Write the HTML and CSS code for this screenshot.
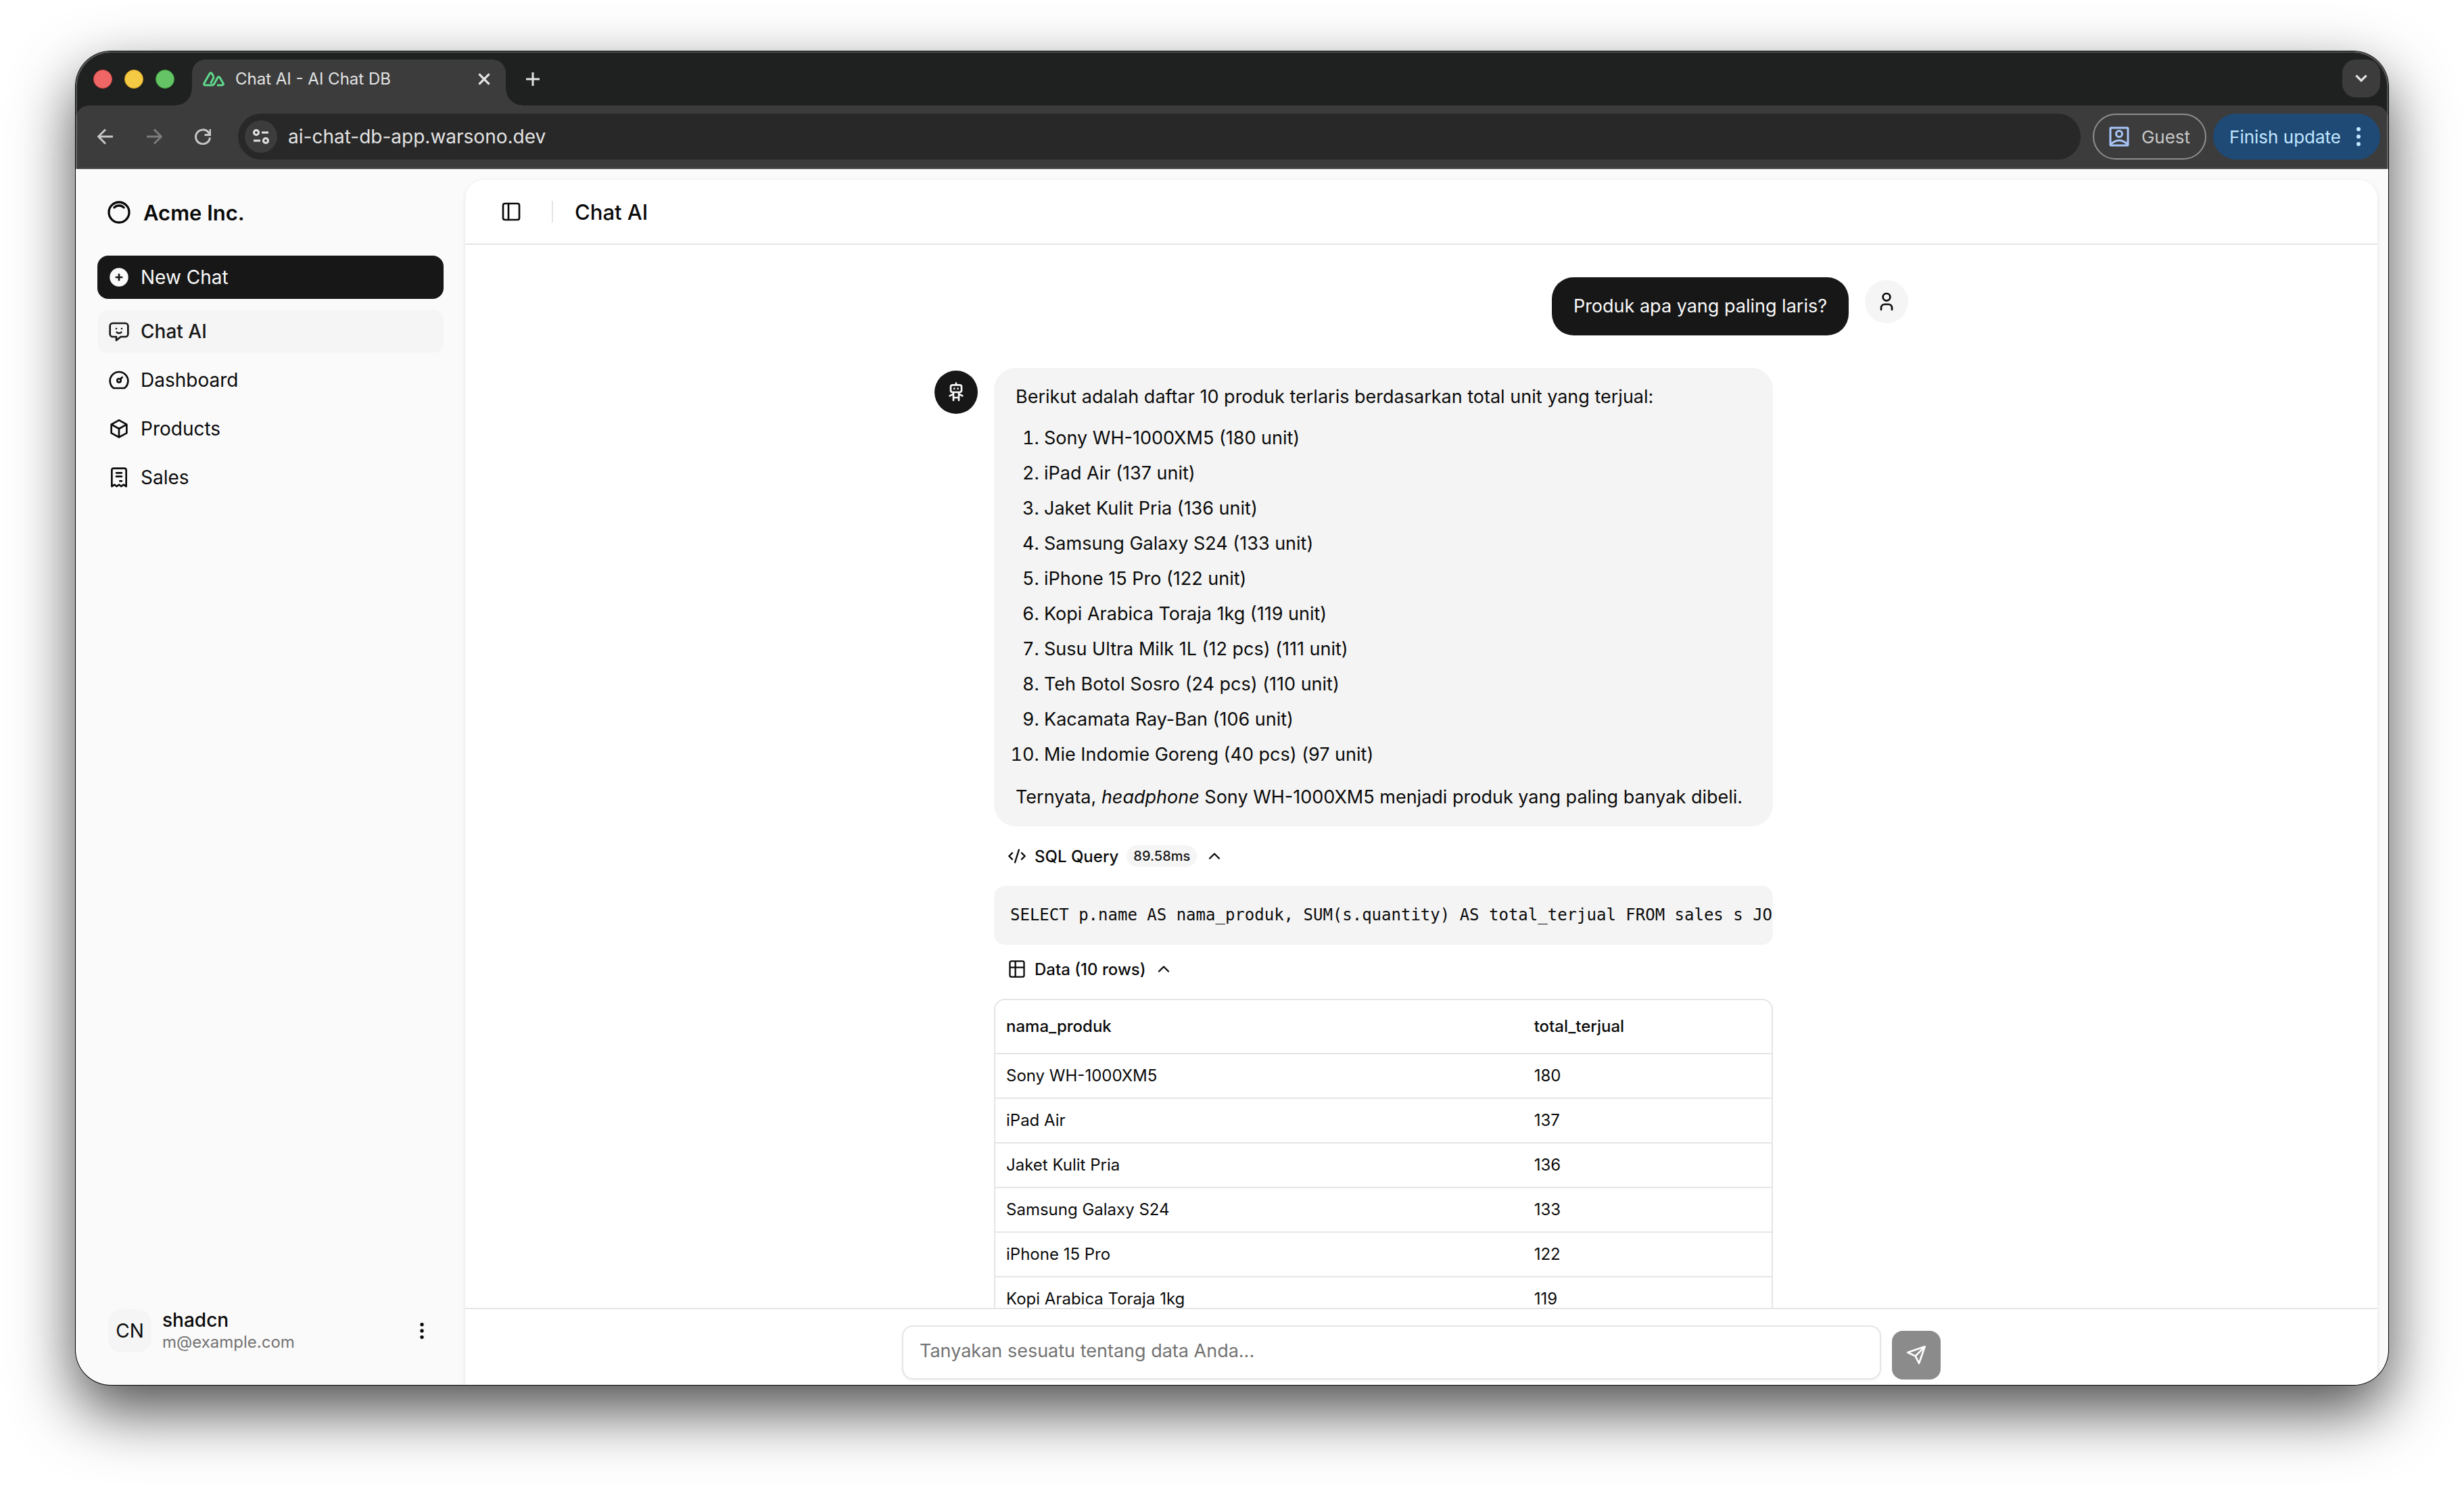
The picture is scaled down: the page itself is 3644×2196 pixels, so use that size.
FILE: index.html
```html
<!DOCTYPE html>
<html lang="id">
<head>
    <meta charset="UTF-8">
    <meta name="viewport" content="width=device-width, initial-scale=1.0">
    <title>Chat AI - AI Chat DB</title>
    <link rel="stylesheet" href="styles.css">
</head>
<body>
    <div class="window">
        <!-- Browser chrome -->
        <div class="chrome">
            <div class="tab-strip">
                <div class="lights">
                    <span class="light red"></span>
                    <span class="light yellow"></span>
                    <span class="light green"></span>
                </div>
                <div class="tab">
                    <svg class="favicon" viewBox="0 0 32 24"><path d="M13 21H4c-2 0-3-1.500-2-3L10 4c1-1.600 2.600-1.600 3.500 0L16 8.500M13 21c2 0 3-.700 4-2.500l5-9c1-1.500 2-1.500 3 0l5 8.700c1 1.500 0 2.800-2 2.800h-7M16.500 8.500l-5 10"/></svg>
                    <span class="tab-title">Chat AI - AI Chat DB</span>
                    <button class="tab-close" aria-label="Close tab">
                        <svg viewBox="0 0 24 24"><path d="M5 5l14 14M19 5L5 19"/></svg>
                    </button>
                </div>
                <button class="new-tab" aria-label="New tab">
                    <svg viewBox="0 0 24 24"><path d="M12 2v20M2 12h20"/></svg>
                </button>
                <button class="tab-search" aria-label="Search tabs">
                    <svg viewBox="0 0 24 24"><path d="M5 8l7 7 7-7"/></svg>
                </button>
            </div>
            <div class="toolbar">
                <div class="nav-buttons">
                    <button aria-label="Back"><svg viewBox="0 0 24 24"><path d="M23 12H1.500M12 1.500L1.500 12 12 22.500"/></svg></button>
                    <button class="dim" aria-label="Forward"><svg viewBox="0 0 24 24"><path d="M1 12h21.500M12 1.500L22.500 12 12 22.500"/></svg></button>
                    <button aria-label="Reload"><svg viewBox="0 0 24 24"><path d="M22.500 13.500A10.500 10.500 0 1 1 20 5.500l2.500 3"/><path d="M23 1v8.500h-8.500"/></svg></button>
                </div>
                <div class="omnibox">
                    <button class="site-info" aria-label="Site information">
                        <svg viewBox="0 0 24 24"><circle cx="5" cy="6" r="3.500"/><path d="M13 6h10M1 18h10"/><circle cx="19" cy="18" r="3.500"/></svg>
                    </button>
                    <input class="url" type="text" value="ai-chat-db-app.warsono.dev" aria-label="Address">
                </div>
                <button class="guest">
                    <svg viewBox="0 0 30 30"><rect x="2" y="2" width="26" height="26" rx="1"/><circle cx="15" cy="11" r="4.500"/><path d="M3 26c7-7 17-7 24 0"/></svg>
                    Guest
                </button>
                <button class="update">
                    Finish update
                    <svg viewBox="0 0 8 28"><circle cx="4" cy="3" r="3"/><circle cx="4" cy="14" r="3"/><circle cx="4" cy="25" r="3"/></svg>
                </button>
            </div>
        </div>

        <div class="app">
            <!-- Sidebar -->
            <aside class="sidebar">
                <a class="brand" href="#">
                    <svg class="icon brand-icon" viewBox="0 0 24 24"><circle cx="12" cy="12" r="9"/><path d="M16.243 7.757a6 6 0 0 0-8.486 0"/></svg>
                    Acme Inc.
                </a>
                <button class="new-chat">
                    <svg class="icon solid" viewBox="0 0 24 24"><path d="M12 1.700a10.300 10.300 0 1 0 0 20.600 10.300 10.300 0 0 0 0-20.600zm1 6.300v3h3v2h-3v3h-2v-3H8v-2h3V8z"/></svg>
                    New Chat
                </button>
                <nav class="menu">
                    <a class="menu-item active" href="#">
                        <svg class="icon" viewBox="0 0 24 24"><path d="M19 3a3 3 0 0 1 3 3v9a3 3 0 0 1-3 3h-5l-5 4v-4H5a3 3 0 0 1-3-3V6a3 3 0 0 1 3-3zM9 9h.01M15 9h.01M9.500 13a3.500 3.500 0 0 0 5 0"/></svg>
                        Chat AI
                    </a>
                    <a class="menu-item" href="#">
                        <svg class="icon" viewBox="0 0 24 24"><circle cx="12" cy="12.500" r="2"/><path d="M13.450 11l2.050-2.050M6 21a10 10 0 1 1 12 0z"/></svg>
                        Dashboard
                    </a>
                    <a class="menu-item" href="#">
                        <svg class="icon" viewBox="0 0 24 24"><path d="M12 2.500l8.500 4.700v9.600L12 21.500l-8.500-4.700V7.200zM12 12l8.500-4.800M12 12v9.500M12 12L3.500 7.200"/></svg>
                        Products
                    </a>
                    <a class="menu-item" href="#">
                        <svg class="icon" viewBox="0 0 24 24"><path d="M4 22V4a2 2 0 0 1 2-2h12a2 2 0 0 1 2 2v18l-3-2-2.500 2-2.500-2-2.500 2L7 20l-3 2M9 7h6M9 11h6M13 16h2"/></svg>
                        Sales
                    </a>
                </nav>
                <button class="account">
                    <span class="account-avatar">CN</span>
                    <span class="account-text">
                        <span class="account-name">shadcn</span>
                        <span class="account-mail">m@example.com</span>
                    </span>
                    <svg class="icon solid" viewBox="0 0 24 24"><circle cx="12" cy="5" r="2"/><circle cx="12" cy="12" r="2"/><circle cx="12" cy="19" r="2"/></svg>
                </button>
            </aside>

            <!-- Chat -->
            <main class="panel">
                <header class="panel-header">
                    <button class="toggle" aria-label="Toggle sidebar">
                        <svg class="icon" viewBox="0 0 24 24"><rect x="3" y="3" width="18" height="18" rx="2"/><path d="M9 3v18"/></svg>
                    </button>
                    <span class="divider"></span>
                    <h1>Chat AI</h1>
                </header>

                <div class="scroll">
                    <div class="messages">
                        <div class="message user">
                            <div class="bubble"><p>Produk apa yang paling laris?</p></div>
                            <span class="avatar">
                                <svg class="icon" viewBox="0 0 24 24"><circle cx="12" cy="7" r="4"/><path d="M6 21v-2a4 4 0 0 1 4-4h4a4 4 0 0 1 4 4v2"/></svg>
                            </span>
                        </div>

                        <div class="message bot">
                            <span class="avatar">
                                <svg class="icon" viewBox="0 0 24 24"><path d="M6 6a2 2 0 0 1 2-2h8a2 2 0 0 1 2 2v4a2 2 0 0 1-2 2H8a2 2 0 0 1-2-2zM12 2v2M9 12v9M15 12v9M5 16l4-2M15 14l4 2M9 18h6M10 8v.01M14 8v.01"/></svg>
                            </span>
                            <div class="answer">
                                <div class="bubble">
                                    <p>Berikut adalah daftar 10 produk terlaris berdasarkan total unit yang terjual:</p>
                                    <ol>
                                        <li>Sony WH-1000XM5 (180 unit)</li>
                                        <li>iPad Air (137 unit)</li>
                                        <li>Jaket Kulit Pria (136 unit)</li>
                                        <li>Samsung Galaxy S24 (133 unit)</li>
                                        <li>iPhone 15 Pro (122 unit)</li>
                                        <li>Kopi Arabica Toraja 1kg (119 unit)</li>
                                        <li>Susu Ultra Milk 1L (12 pcs) (111 unit)</li>
                                        <li>Teh Botol Sosro (24 pcs) (110 unit)</li>
                                        <li>Kacamata Ray-Ban (106 unit)</li>
                                        <li>Mie Indomie Goreng (40 pcs) (97 unit)</li>
                                    </ol>
                                    <p>Ternyata, <em>headphone</em> Sony WH-1000XM5 menjadi produk yang paling banyak dibeli.</p>
                                </div>

                                <section class="detail">
                                    <button class="detail-toggle">
                                        <svg class="icon" viewBox="0 0 24 24"><path d="M18 16l4-4-4-4M6 8l-4 4 4 4M14.500 4l-5 16"/></svg>
                                        SQL Query
                                        <span class="badge">89.58ms</span>
                                        <svg class="icon" viewBox="0 0 24 24"><path d="M18 15l-6-6-6 6"/></svg>
                                    </button>
                                    <pre class="sql"><code>SELECT p.name AS nama_produk, SUM(s.quantity) AS total_terjual FROM sales s JOIN products p ON s.product_id = p.id GROUP BY p.name ORDER BY total_terjual DESC LIMIT 10</code></pre>
                                </section>

                                <section class="detail">
                                    <button class="detail-toggle">
                                        <svg class="icon" viewBox="0 0 24 24"><path d="M5 2h14a2 2 0 0 1 2 2v16a2 2 0 0 1-2 2H5a2 2 0 0 1-2-2V4a2 2 0 0 1 2-2zM3 10h18M10 2v20"/></svg>
                                        Data (10 rows)
                                        <svg class="icon" viewBox="0 0 24 24"><path d="M18 15l-6-6-6 6"/></svg>
                                    </button>
                                    <div class="table-wrap">
                                        <table>
                                            <thead>
                                                <tr><th>nama_produk</th><th>total_terjual</th></tr>
                                            </thead>
                                            <tbody>
                                                <tr><td>Sony WH-1000XM5</td><td>180</td></tr>
                                                <tr><td>iPad Air</td><td>137</td></tr>
                                                <tr><td>Jaket Kulit Pria</td><td>136</td></tr>
                                                <tr><td>Samsung Galaxy S24</td><td>133</td></tr>
                                                <tr><td>iPhone 15 Pro</td><td>122</td></tr>
                                                <tr><td>Kopi Arabica Toraja 1kg</td><td>119</td></tr>
                                                <tr><td>Susu Ultra Milk 1L (12 pcs)</td><td>111</td></tr>
                                                <tr><td>Teh Botol Sosro (24 pcs)</td><td>110</td></tr>
                                                <tr><td>Kacamata Ray-Ban</td><td>106</td></tr>
                                                <tr><td>Mie Indomie Goreng (40 pcs)</td><td>97</td></tr>
                                            </tbody>
                                        </table>
                                    </div>
                                </section>
                            </div>
                        </div>
                    </div>
                </div>

                <form class="composer">
                    <textarea rows="1" aria-label="Pesan" placeholder="Tanyakan sesuatu tentang data Anda..."></textarea>
                    <button class="send" type="button" aria-label="Kirim">
                        <svg class="icon" viewBox="0 0 24 24"><path d="M21.500 2.500L15 21l-4-8-8.500-4zM21.500 2.500L11 13"/></svg>
                    </button>
                </form>
            </main>
        </div>
    </div>
</body>
</html>
```
FILE: styles.css
```css
/* Basic Reset */
* {
    margin: 0;
    padding: 0;
    box-sizing: border-box;
}

body {
    font-family: Inter, 'Liberation Sans', sans-serif;
    font-size: 28px;
    color: #0a0a0a;
    background: #fff;
    height: 100vh;
    padding: 76px 112px 148px;
    overflow: hidden;
}

button,
input,
textarea {
    font: inherit;
    color: inherit;
    background: none;
    border: none;
    outline: none;
}

button {
    display: flex;
    align-items: center;
    cursor: pointer;
}

a {
    color: inherit;
    text-decoration: none;
}

svg {
    flex: none;
    fill: none;
    stroke: currentColor;
    stroke-width: 2;
}

.icon {
    width: 32px;
    height: 32px;
    stroke-linecap: round;
    stroke-linejoin: round;
}

.icon.solid {
    fill: currentColor;
    stroke: none;
}

.window {
    display: flex;
    flex-direction: column;
    height: 100%;
    border-radius: 52px;
    overflow: hidden;
    background: #fafafa;
    box-shadow: 0 0 0 1px #000, 0 38px 92px rgba(0, 0, 0, 0.7);
}

/* Browser chrome */
.chrome {
    position: relative;
    background: #1f2120;
    color: #e3e3e3;
}

/* light rim round the top of the window */
.chrome::after {
    content: "";
    position: absolute;
    inset: 0;
    border: 2px solid rgba(255, 255, 255, 0.22);
    border-bottom: none;
    border-radius: 52px 52px 0 0;
    pointer-events: none;
}

.tab-strip {
    display: flex;
    height: 80px;
    padding: 12px 12px 0 26px;
}

.lights {
    display: flex;
    gap: 18px;
    margin-right: 26px;
    padding-top: 15px;
}

.light {
    width: 28px;
    height: 28px;
    border-radius: 50%;
}

.light.red {
    background: #ee6766;
    border: 1px solid #d8453f;
}

.light.yellow {
    background: #f4c944;
    border: 1px solid #dba520;
}

.light.green {
    background: #65c466;
    border: 1px solid #3fa53c;
}

.tab {
    position: relative;
    display: flex;
    align-items: center;
    width: 464px;
    padding: 0 19px 11px 16px;
    background: #3c3c3c;
    border-radius: 20px 20px 0 0;
}

/* flared feet of the tab */
.tab::before,
.tab::after {
    content: "";
    position: absolute;
    bottom: 0;
    width: 24px;
    height: 24px;
}

.tab::before {
    right: 100%;
    background: radial-gradient(circle at 0 0, transparent 23px, #3c3c3c 24px);
}

.tab::after {
    left: 100%;
    background: radial-gradient(circle at 100% 0, transparent 23px, #3c3c3c 24px);
}

.favicon {
    width: 32px;
    height: 24px;
    color: #5fdb8b;
    stroke-width: 3;
    stroke-linejoin: round;
}

.tab-title {
    flex: 1;
    margin-left: 16px;
    font-size: 24px;
}

.tab-close svg {
    width: 26px;
    height: 26px;
    stroke-width: 3;
}

.new-tab {
    margin: 0 auto 11px 28px;
}

.new-tab svg {
    width: 24px;
    height: 24px;
    stroke-width: 3;
}

.tab-search {
    justify-content: center;
    width: 56px;
    height: 56px;
    border-radius: 20px;
    background: #3c3c3c;
}

.tab-search svg {
    width: 26px;
    height: 26px;
    stroke-width: 3;
}

.toolbar {
    display: flex;
    align-items: center;
    height: 94px;
    padding: 0 12px 0 32px;
    background: #3c3c3c;
    border-bottom: 2px solid #4a4a4a;
    border-radius: 20px 20px 0 0;
}

.nav-buttons {
    display: flex;
    gap: 48px;
    margin-right: 40px;
    color: #c7c7c7;
}

.nav-buttons svg {
    width: 24px;
    height: 24px;
    stroke-width: 3;
}

.nav-buttons .dim {
    color: #7c7c7c;
}

.omnibox {
    flex: 1;
    display: flex;
    align-items: center;
    height: 68px;
    padding: 0 10px;
    border-radius: 34px;
    background: #282828;
}

.site-info {
    justify-content: center;
    width: 48px;
    height: 48px;
    border-radius: 50%;
    background: #3c3c3c;
}

.site-info svg {
    width: 24px;
    height: 24px;
    stroke-width: 3;
}

.url {
    flex: 1;
    margin-left: 16px;
}

.guest,
.update {
    height: 68px;
    border-radius: 34px;
    font-size: 26px;
}

.guest {
    gap: 18px;
    margin: 0 10px 0 18px;
    padding: 0 22px;
    border: 2px solid #8f8f8f;
    color: #c7c7c7;
}

.guest svg {
    width: 30px;
    height: 30px;
    stroke-width: 3;
    color: #a8c7fa;
}

.update {
    gap: 22px;
    padding: 0 28px 0 24px;
    background: #1f4a76;
    color: #c2e7ff;
}

.update svg {
    width: 8px;
    height: 28px;
    fill: currentColor;
    stroke: none;
}

/* App */
.app {
    flex: 1;
    display: flex;
    min-height: 0;
    padding: 16px 16px 0 0;
}

.sidebar {
    display: flex;
    flex-direction: column;
    width: 576px;
    padding: 16px 32px 32px;
}

.brand {
    display: flex;
    align-items: center;
    gap: 16px;
    height: 64px;
    padding: 0 12px;
    font-size: 31px;
    font-weight: 600;
}

.brand-icon {
    width: 40px;
    height: 40px;
}

.new-chat,
.menu-item {
    display: flex;
    align-items: center;
    gap: 16px;
    height: 64px;
    padding: 0 16px;
    border-radius: 16px;
}

.new-chat {
    margin: 32px 0 16px;
    background: #171717;
    color: #fafafa;
}

.menu {
    display: flex;
    flex-direction: column;
    gap: 8px;
}

.menu-item.active {
    background: #f5f5f5;
    color: #171717;
    font-weight: 500;
}

.account {
    gap: 16px;
    height: 96px;
    margin-top: auto;
    padding: 0 16px;
    text-align: left;
}

.account-avatar {
    width: 64px;
    height: 64px;
    border-radius: 20px;
    background: #f5f5f5;
    line-height: 64px;
    text-align: center;
}

.account-text {
    flex: 1;
    display: flex;
    flex-direction: column;
}

.account-name {
    font-weight: 500;
    line-height: 34px;
}

.account-mail {
    font-size: 24px;
    line-height: 32px;
    color: #737373;
}

.panel {
    flex: 1;
    display: flex;
    flex-direction: column;
    min-width: 0;
    border-radius: 28px 28px 0 0;
    background: #fff;
    box-shadow: 0 2px 6px rgba(0, 0, 0, 0.1);
}

.panel-header {
    display: flex;
    align-items: center;
    height: 96px;
    padding: 0 52px;
    border-bottom: 2px solid #e5e5e5;
}

.divider {
    width: 2px;
    height: 32px;
    margin: 0 32px 0 44px;
    background: #e5e5e5;
}

.panel-header h1 {
    font-size: 31px;
    font-weight: 500;
}

.scroll {
    flex: 1;
    min-height: 0;
    overflow-y: auto;
    scrollbar-width: none;
}

.messages {
    display: flex;
    flex-direction: column;
    gap: 48px;
    max-width: 1536px;
    margin: 0 auto;
    padding: 48px;
}

.message {
    display: flex;
    align-items: flex-start;
    gap: 24px;
}

.message.user {
    justify-content: flex-end;
}

.avatar {
    flex: none;
    display: flex;
    align-items: center;
    justify-content: center;
    width: 64px;
    height: 64px;
    margin-top: 4px;
    border-radius: 50%;
    background: #f5f5f5;
}

.bot .avatar {
    background: #171717;
    color: #fafafa;
}

.bubble {
    padding: 20px 32px;
    border-radius: 32px;
    background: #f4f4f4;
    font-size: 27px;
    line-height: 46px;
}

.user .bubble {
    background: #171717;
    color: #fafafa;
}

.answer {
    width: 80%;
}

.bubble ol {
    margin: 12px 0 14px;
    padding-left: 42px;
    line-height: 52px;
}

.detail {
    padding-top: 4px;
}

.bubble + .detail {
    padding-top: 12px;
}

.detail-toggle {
    gap: 12px;
    height: 64px;
    margin-bottom: 12px;
    padding: 0 20px;
    font-size: 24px;
    font-weight: 500;
}

.detail-toggle .icon {
    width: 28px;
    height: 28px;
}

.badge {
    padding: 0 10px;
    border-radius: 16px;
    background: #f5f5f5;
    color: #171717;
    font-size: 20px;
    line-height: 32px;
}

.sql {
    padding: 24px;
    border-radius: 16px;
    background: #f4f4f4;
    font-family: 'DejaVu Sans Mono', monospace;
    font-size: 24px;
    line-height: 39px;
    overflow-x: auto;
    scrollbar-width: none;
}

.sql code {
    font-family: inherit;
}

.table-wrap {
    border: 2px solid #e5e5e5;
    border-radius: 16px;
    overflow: hidden;
}

table {
    width: 100%;
    border-collapse: separate;
    border-spacing: 0;
    font-size: 24px;
    line-height: 32px;
    text-align: left;
}

th,
td {
    padding: 16px;
    border-bottom: 2px solid #e5e5e5;
}

th {
    height: 80px;
    font-weight: 500;
}

th:first-child {
    width: 68%;
}

tr:last-child td {
    border-bottom: none;
}

.composer {
    display: flex;
    align-items: flex-end;
    justify-content: center;
    gap: 16px;
    padding: 24px 48px 8px;
    border-top: 2px solid #e5e5e5;
}

.composer textarea {
    flex: 1;
    max-width: 1448px;
    height: 80px;
    padding: 14px 24px;
    border: 2px solid #e5e5e5;
    border-radius: 16px;
    font-size: 27px;
    line-height: 44px;
    resize: none;
    box-shadow: 0 2px 4px rgba(0, 0, 0, 0.05);
}

.composer textarea::placeholder {
    color: #737373;
}

.send {
    justify-content: center;
    width: 72px;
    height: 72px;
    border-radius: 16px;
    background: #8b8b8b;
    color: #fff;
}
```
